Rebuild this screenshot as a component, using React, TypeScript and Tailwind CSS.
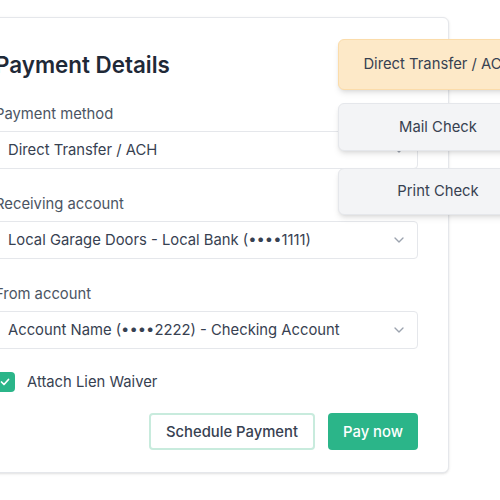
import React from "react";

const Chevron = () => (
  <svg width="16" height="16" viewBox="0 0 24 24" fill="none" stroke="#9ca3af" strokeWidth="2" strokeLinecap="round" strokeLinejoin="round">
    <path d="M6 9l6 6 6-6" />
  </svg>
);

function Field({ label, value }: { label: string; value: string }) {
  return (
    <div className="flex flex-col">
      <div className="text-[14.8px] leading-[20px] text-[#4b5563]">{label}</div>
      <div className="mt-[7px] h-[38px] border border-[#e5e7eb] rounded-[4px] bg-white flex items-center justify-between pl-[12px] pr-[10px]">
        <span className="text-[14.8px] text-[#374151]">{value}</span>
        <Chevron />
      </div>
    </div>
  );
}

export default function App() {
  return (
    <div className="relative w-[500px] h-[500px] overflow-hidden bg-white" style={{ fontFamily: "Inter, 'Noto Sans', sans-serif" }}>
      <div className="ml-[-36px] mt-[17px] w-[485px] h-[456px] border border-[#e5e7eb] rounded-[6px] bg-white shadow-sm px-[30px] pt-[29px] pb-[20px] flex flex-col">
        <h1 className="text-[22.4px] leading-[36px] font-semibold text-[#1f2937]">Payment Details</h1>
        <div className="mt-[21px] flex flex-col gap-[25px]">
          <Field label="Payment method" value="Direct Transfer / ACH" />
          <Field label="Receiving account" value="Local Garage Doors - Local Bank (••••1111)" />
          <Field label="From account" value="Account Name (••••2222) - Checking Account" />
        </div>
        <div className="mt-[22px] flex items-center gap-[12px]">
          <div className="w-[20px] h-[20px] rounded-[4px] bg-[#2bb589] flex items-center justify-center">
            <svg width="12" height="12" viewBox="0 0 24 24" fill="none" stroke="white" strokeWidth="3.5" strokeLinecap="round" strokeLinejoin="round">
              <path d="M5 12l5 5 9-10" />
            </svg>
          </div>
          <span className="text-[14.8px] text-[#374151]">Attach Lien Waiver</span>
        </div>
        <div className="mt-[20px] flex justify-end gap-[13px]">
          <button className="h-[37px] px-[15px] border-2 border-[#c8ebdd] rounded-[4px] text-[14.8px] font-medium text-[#374151] bg-white">Schedule Payment</button>
          <button className="h-[37px] w-[90px] rounded-[4px] text-[14.8px] font-medium text-white bg-[#2bb589]">Pay now</button>
        </div>
      </div>
      <div className="absolute left-[338px] top-[39px] w-[200px] flex flex-col">
        <div className="h-[51px] rounded-[6px] bg-[#fde9c8] border border-[#fbdcaa] shadow-md flex items-center justify-center text-[14.8px] text-[#374151]">Direct Transfer / ACH</div>
        <div className="mt-[13px] h-[48px] rounded-[6px] bg-[#f3f4f6] border border-[#e5e7eb] shadow-md flex items-center justify-center text-[14.8px] text-[#374151]">Mail Check</div>
        <div className="mt-[17px] h-[47px] rounded-[6px] bg-[#f3f4f6] border border-[#e5e7eb] shadow-md flex items-center justify-center text-[14.8px] text-[#374151]">Print Check</div>
      </div>
    </div>
  );
}
